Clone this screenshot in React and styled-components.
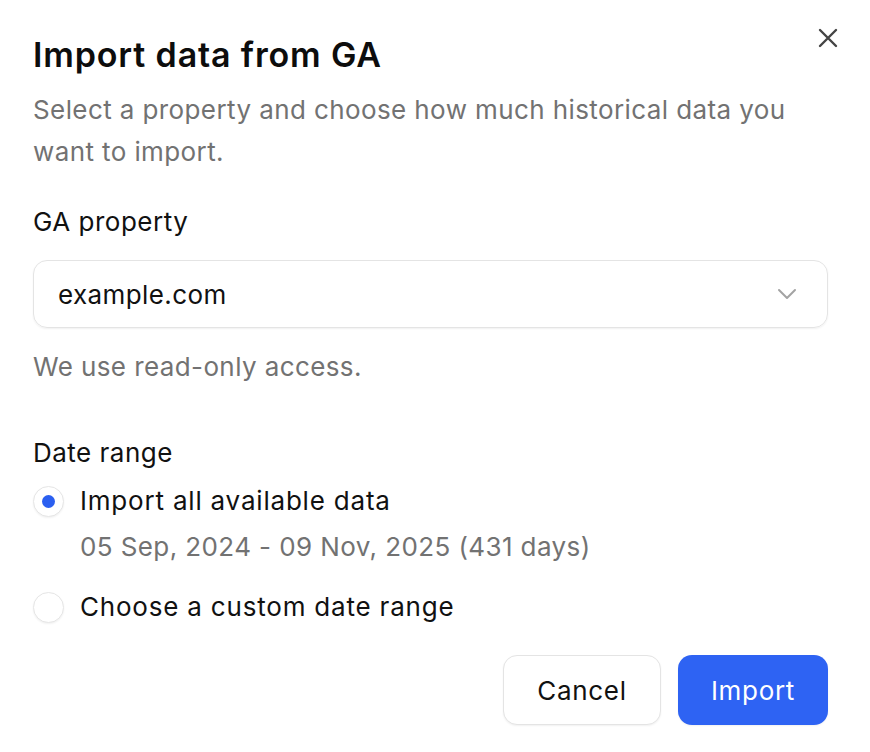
import React from "react";
import styled, { createGlobalStyle } from "styled-components";

const Global = createGlobalStyle`
  html, body { margin: 0; padding: 0; background: #fff; }
  body { font-family: Inter, "Noto Sans", sans-serif; color: #111; -webkit-font-smoothing: antialiased; }
  * { box-sizing: border-box; }
`;

const Dialog = styled.div`
  position: relative;
  width: 870px;
  height: 752px;
  padding: 35px 42px 0 33px;
  display: flex;
  flex-direction: column;
  background: #fff;
`;

const CloseButton = styled.button`
  position: absolute;
  top: 27px;
  right: 31px;
  width: 22px;
  height: 22px;
  padding: 0;
  border: none;
  background: transparent;
  display: flex;
  align-items: center;
  justify-content: center;
  color: #444;
  cursor: pointer;
`;

const Title = styled.h2`
  margin: 0;
  font-size: 34px;
  line-height: 40px;
  font-weight: 600;
  letter-spacing: 0.85px;
  color: #0d0d0d;
`;

const Description = styled.p`
  margin: 14px 0 0;
  font-size: 26px;
  line-height: 42px;
  letter-spacing: 0.4px;
  color: #727272;
  white-space: nowrap;
`;

const Label = styled.div`
  margin-top: ${(p) => p.$mt || 0}px;
  font-size: 26px;
  line-height: 36px;
  letter-spacing: 0.5px;
  color: #111;
`;

const Select = styled.div`
  margin-top: 20px;
  height: 68px;
  border: 1.5px solid #e4e4e4;
  border-radius: 14px;
  box-shadow: 0 1px 2px rgba(0, 0, 0, 0.06);
  display: flex;
  align-items: center;
  justify-content: space-between;
  padding: 0 30px 0 24px;
  font-size: 26px;
  letter-spacing: 0.4px;
  color: #111;
`;

const Hint = styled.div`
  margin-top: ${(p) => p.$mt || 0}px;
  padding-left: ${(p) => p.$indent || 0}px;
  font-size: 26px;
  line-height: 36px;
  letter-spacing: 0.4px;
  color: #727272;
`;

const RadioRow = styled.label`
  margin-top: ${(p) => p.$mt || 0}px;
  display: flex;
  align-items: center;
  gap: 16px;
  font-size: 26px;
  line-height: 36px;
  letter-spacing: 0.8px;
  color: #111;
`;

const RadioCircle = styled.span`
  width: 31px;
  height: 31px;
  border-radius: 50%;
  border: 1.5px solid #e6e6e6;
  box-shadow: 0 1px 2px rgba(0, 0, 0, 0.06);
  display: flex;
  align-items: center;
  justify-content: center;
  background: #fff;
  flex-shrink: 0;

  &::after {
    content: "";
    width: 13px;
    height: 13px;
    border-radius: 50%;
    background: ${(p) => (p.$checked ? "#2b5ff0" : "transparent")};
  }
`;

const Footer = styled.div`
  margin-top: 30px;
  display: flex;
  justify-content: flex-end;
  gap: 17px;
`;

const Button = styled.button`
  height: 70px;
  width: ${(p) => p.$w}px;
  border-radius: 14px;
  font-family: inherit;
  font-size: 26px;
  letter-spacing: 0.7px;
  cursor: pointer;
  border: ${(p) => (p.$primary ? "none" : "1.5px solid #e4e4e4")};
  background: ${(p) => (p.$primary ? "#2e63f3" : "#fff")};
  color: ${(p) => (p.$primary ? "#fff" : "#111")};
  box-shadow: 0 1px 2px rgba(0, 0, 0, 0.06);
`;

export default function App() {
  return (
    <>
      <Global />
      <Dialog>
        <CloseButton aria-label="Close">
          <svg width="20" height="20" viewBox="0 0 20 20" fill="none" stroke="currentColor" strokeWidth="2.4" strokeLinecap="round">
            <path d="M2 2 L18 18 M18 2 L2 18" />
          </svg>
        </CloseButton>
        <Title>Import data from GA</Title>
        <Description>
          Select a property and choose how much historical data you
          <br />
          want to import.
        </Description>
        <Label $mt={31}>GA property</Label>
        <Select>
          <span>example.com</span>
          <svg width="20" height="12" viewBox="0 0 20 12" fill="none" stroke="#a3a3a3" strokeWidth="2" strokeLinecap="round" strokeLinejoin="round">
            <path d="M2 2 L10 10 L18 2" />
          </svg>
        </Select>
        <Hint $mt={21}>We use read-only access.</Hint>
        <Label $mt={50}>Date range</Label>
        <RadioRow $mt={12}>
          <RadioCircle $checked />
          Import all available data
        </RadioRow>
        <Hint $mt={10} $indent={47}>05 Sep, 2024 - 09 Nov, 2025 (431 days)</Hint>
        <RadioRow $mt={24}>
          <RadioCircle />
          Choose a custom date range
        </RadioRow>
        <Footer>
          <Button $w={158}>Cancel</Button>
          <Button $w={150} $primary>Import</Button>
        </Footer>
      </Dialog>
    </>
  );
}
